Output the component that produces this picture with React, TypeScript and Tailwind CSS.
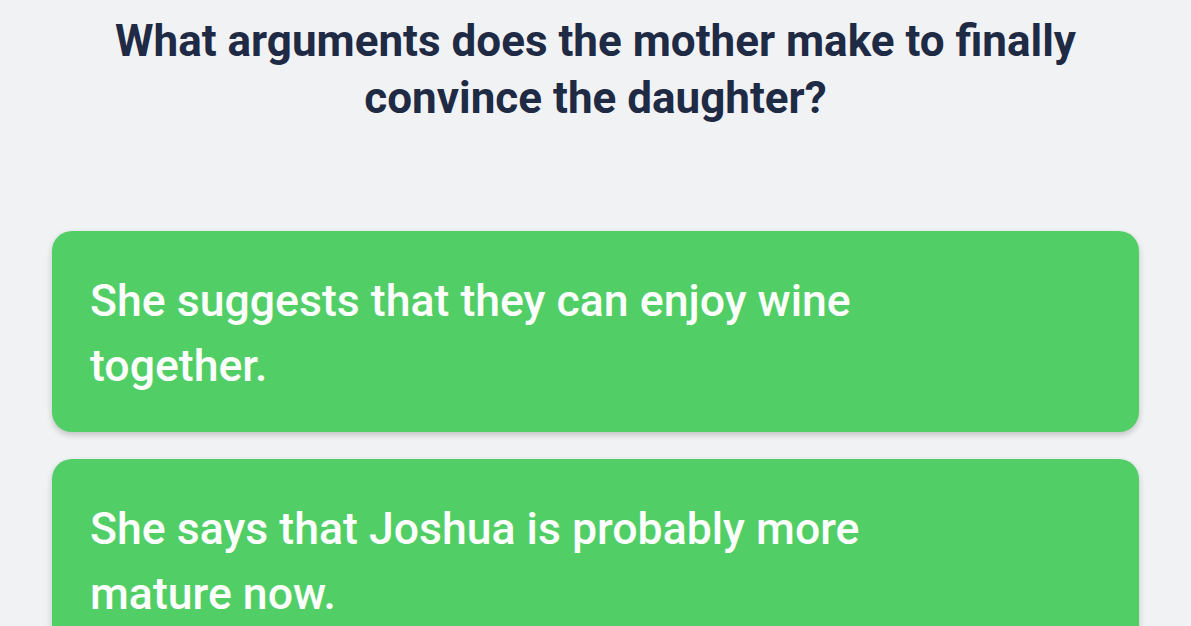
export default function App() {
  const answers = [
    "She suggests that they can enjoy wine together.",
    "She says that Joshua is probably more mature now.",
  ];
  return (
    <div className="min-h-screen bg-[#f1f2f4] px-[52px] pt-[13px]" style={{ fontFamily: "Roboto, 'Liberation Sans', sans-serif" }}>
      <h1 className="mx-auto max-w-[1040px] text-center text-[44px] font-bold leading-[57px] text-[#1f2a44]">
        What arguments does the mother make to finally convince the daughter?
      </h1>
      <div className="mt-[104px] flex flex-col gap-[27px]">
        {answers.map((a) => (
          <div key={a} className="rounded-[20px] bg-[#51cf66] px-[38px] pt-[38px] pb-[33px] shadow-[0_3px_6px_rgba(0,0,0,0.2)]">
            <p className="max-w-[80%] text-[44.6px] font-medium leading-[65px] text-white">{a}</p>
          </div>
        ))}
      </div>
    </div>
  );
}
